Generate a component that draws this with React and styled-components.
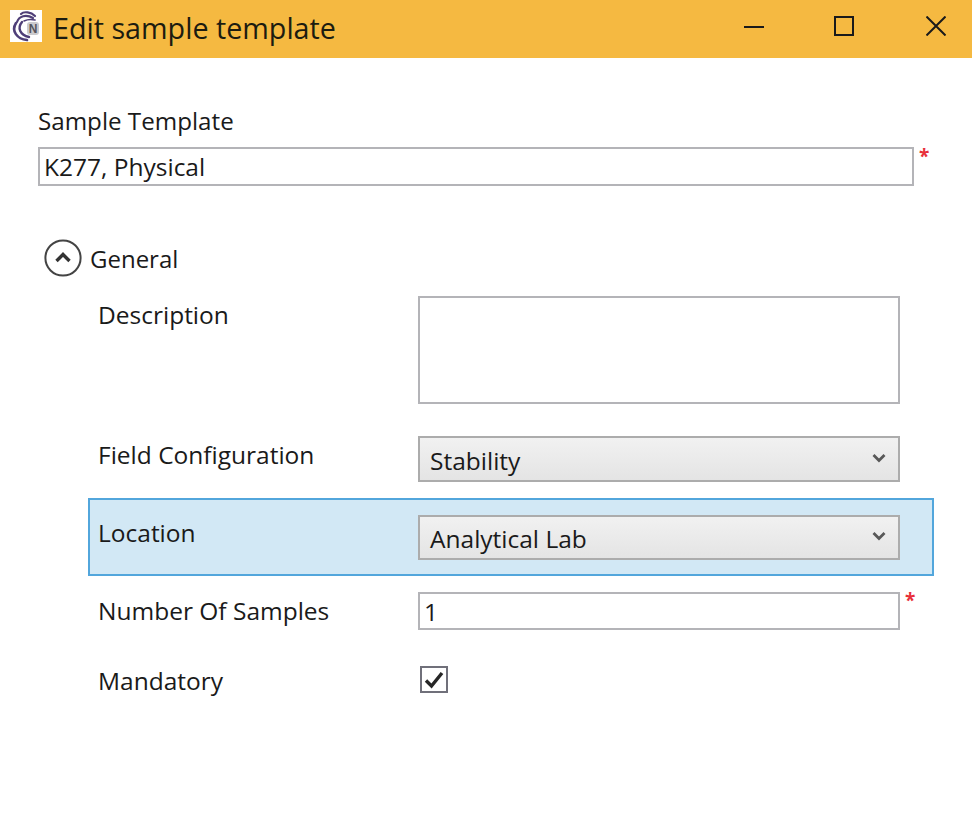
import React from "react";
import styled, { createGlobalStyle } from "styled-components";

const GlobalStyle = createGlobalStyle`
  html, body {
    margin: 0;
    padding: 0;
    background: #fff;
  }
  body {
    font-family: "Open Sans", "Noto Sans", "Liberation Sans", sans-serif;
    font-size: 24.5px;
    color: #1a1a1a;
  }
  * {
    box-sizing: border-box;
  }
`;

const Logo = () => (
  <LogoBox>
    <svg width="32" height="32" viewBox="0 0 32 32" fill="none">
      <g stroke="#4f3f78" strokeLinecap="round" fill="none">
        <path d="M11 4 C14 1 21 2 25 6" strokeWidth="2.2" />
        <path d="M7 12 C9 6 16 4 23 8" strokeWidth="2.2" />
        <path d="M6 13 C1 21 7 29 17 30" strokeWidth="2.6" />
        <path d="M12 12 C7 18 10 25 19 27" strokeWidth="2.4" />
        <path d="M14 11 C18 9 21 9 25 10" strokeWidth="1.6" />
      </g>
      <rect x="17" y="12" width="12" height="13" rx="3" fill="#cbcbce" />
      <text x="23" y="23" textAnchor="middle" fontSize="12" fontWeight="700" fontFamily="Liberation Sans, sans-serif" fill="#55555c">
        N
      </text>
    </svg>
  </LogoBox>
);

const Chevron = () => (
  <svg width="14" height="10" viewBox="0 0 14 10" fill="none">
    <path d="M1.5 2 L7 7.5 L12.5 2" stroke="#585858" strokeWidth="2.8" />
  </svg>
);

const App = () => {
  return (
    <Page>
      <GlobalStyle />
      <TitleBar>
        <Logo />
        <Title>Edit sample template</Title>
        <WindowButtons>
          <WindowButton>
            <svg width="20" height="20" viewBox="0 0 20 20" fill="none">
              <path d="M0 11 H20" stroke="#1a1a1a" strokeWidth="2" />
            </svg>
          </WindowButton>
          <WindowButton>
            <svg width="20" height="20" viewBox="0 0 20 20" fill="none">
              <rect x="1" y="1" width="18" height="18" stroke="#1a1a1a" strokeWidth="2" />
            </svg>
          </WindowButton>
          <CloseButton>
            <svg width="20" height="20" viewBox="0 0 20 20" fill="none">
              <path d="M0.5 0.5 L19.5 19.5 M19.5 0.5 L0.5 19.5" stroke="#1a1a1a" strokeWidth="2" />
            </svg>
          </CloseButton>
        </WindowButtons>
      </TitleBar>

      <Form>
        <TopLabel>Sample Template</TopLabel>
        <TopField>
          <TextBox $height={39}>K277, Physical</TextBox>
          <Required>*</Required>
        </TopField>

        <SectionHeader>
          <CollapseIcon>
            <svg width="38" height="38" viewBox="0 0 38 38" fill="none">
              <circle cx="19" cy="19" r="17.6" stroke="#444" strokeWidth="2" />
              <path d="M12.5 22 L19 15.5 L25.5 22" stroke="#333" strokeWidth="3.4" />
            </svg>
          </CollapseIcon>
          General
        </SectionHeader>

        <Rows>
          <Row>
            <RowLabel>Description</RowLabel>
            <TextBox $height={108} />
          </Row>
          <Row>
            <RowLabel>Field Configuration</RowLabel>
            <Combo $height={46}>
              Stability
              <Chevron />
            </Combo>
          </Row>
          <Row $selected>
            <RowLabel>Location</RowLabel>
            <Combo $height={45} $top={1} $textTop={2}>
              Analytical Lab
              <Chevron />
            </Combo>
          </Row>
          <Row>
            <RowLabel>Number Of Samples</RowLabel>
            <ControlWrap>
              <TextBox $height={38}>1</TextBox>
              <RowRequired>*</RowRequired>
            </ControlWrap>
          </Row>
          <Row>
            <RowLabel>Mandatory</RowLabel>
            <CheckBox>
              <svg width="20" height="18" viewBox="0 0 20 18" fill="none">
                <path d="M2 9.5 L7.5 15 L18 2" stroke="#262626" strokeWidth="3.4" />
              </svg>
            </CheckBox>
          </Row>
        </Rows>
      </Form>
    </Page>
  );
};

export default App;

const Page = styled.div`
  width: 972px;
  height: 822px;
  overflow: hidden;
  background: #fff;
`;

const TitleBar = styled.div`
  height: 58px;
  background: #f5b941;
  display: flex;
  align-items: center;
  padding: 0 0 6px 10px;
`;

const LogoBox = styled.div`
  width: 32px;
  height: 32px;
  background: #fff;
  display: flex;
`;

const Title = styled.div`
  margin: 2px 0 0 11px;
  font-size: 28.7px;
  color: #1c1c10;
`;

const WindowButtons = styled.div`
  margin-left: auto;
  display: flex;
  padding-right: 26px;
  gap: 70px;
`;

const WindowButton = styled.div`
  width: 20px;
  height: 20px;
  display: flex;
`;

const CloseButton = styled(WindowButton)`
  margin-left: 2px;
`;

const Form = styled.div`
  padding: 46px 0 0 38px;
`;

const TopLabel = styled.div`
  line-height: 34px;
  font-size: 24.2px;
`;

const TopField = styled.div`
  margin-top: 9px;
  width: 876px;
  position: relative;
`;

const TextBox = styled.div`
  height: ${(p) => p.$height}px;
  width: 100%;
  border: 2px solid #b4b4b8;
  background: #fff;
  padding: 0 4px;
  line-height: 36px;
`;

const Required = styled.span`
  position: absolute;
  left: 881px;
  top: -3px;
  color: #e8303a;
  font-size: 19px;
  font-weight: 700;
  line-height: 24px;
`;

const RowRequired = styled(Required)`
  left: 487px;
  top: -4px;
`;

const SectionHeader = styled.div`
  margin-top: 53px;
  margin-left: 6px;
  display: flex;
  align-items: center;
  gap: 8px;
  height: 38px;
  font-size: 24px;
`;

const CollapseIcon = styled.div`
  width: 38px;
  height: 38px;
  display: flex;
`;

const Rows = styled.div`
  margin: 3px 0 0 50px;
  width: 846px;
`;

const Row = styled.div`
  display: grid;
  grid-template-columns: 320px 482px;
  align-items: start;
  padding: 14px 0 14px 8px;
  border: 2px solid ${(p) => (p.$selected ? "#52a6dc" : "transparent")};
  background: ${(p) => (p.$selected ? "#d2e8f5" : "transparent")};
`;

const RowLabel = styled.div`
  line-height: 34px;
  margin-top: 2px;
`;

const Combo = styled.div`
  height: ${(p) => p.$height}px;
  margin-top: ${(p) => p.$top || 0}px;
  border: 2px solid #acacac;
  background: linear-gradient(#f1f1f1, #e4e4e4);
  display: flex;
  align-items: center;
  justify-content: space-between;
  padding: ${(p) => p.$textTop ?? 3}px 12px 0 10px;
  & > svg {
    margin-top: -6px;
  }
`;

const ControlWrap = styled.div`
  position: relative;
`;

const CheckBox = styled.div`
  margin: 4px 0 0 2px;
  width: 28px;
  height: 27px;
  border: 2px solid #70707a;
  background: #fff;
  display: flex;
  align-items: center;
  justify-content: center;
`;
